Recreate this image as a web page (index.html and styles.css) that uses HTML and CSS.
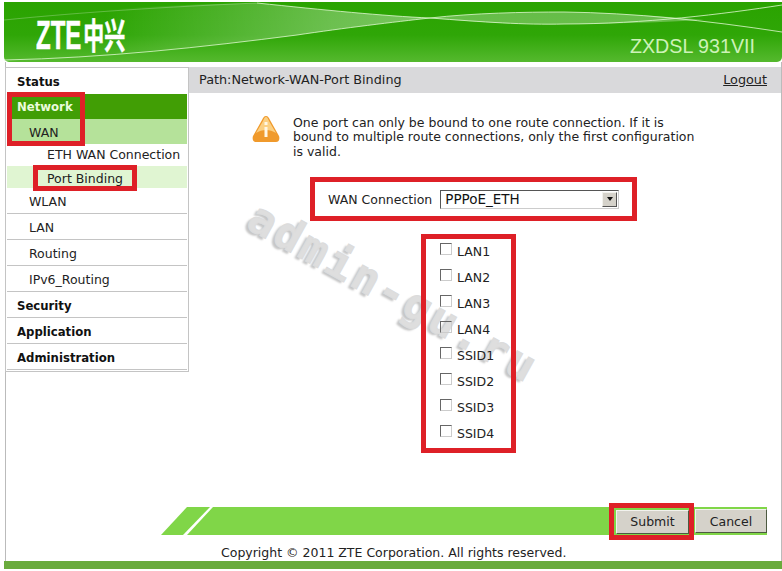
FILE: index.html
```html
<!DOCTYPE html>
<html lang="en">

<head>
    <meta charset="UTF-8">
    <meta name="viewport" content="width=device-width, initial-scale=1.0">
    <title>ZXDSL 931VII</title>
    <link rel="stylesheet" href="styles.css">
</head>

<body>

    <div class="page">
        <header class="banner">
            <svg class="swoosh" viewBox="0 0 778 60" preserveAspectRatio="none" aria-hidden="true">
                <defs>
                    <linearGradient id="ribbon" x1="0" x2="1" y1="0" y2="0">
                        <stop offset="0" stop-color="#fff" stop-opacity="0" />
                        <stop offset="0.7" stop-color="#fff" stop-opacity=".3" />
                        <stop offset="1" stop-color="#fff" stop-opacity=".36" />
                    </linearGradient>
                </defs>
                <path d="M100 8C150 4 200 2 253 1C320 8 380 14 426 16C390 20 340 26 293 33C230 41 170 48 100 52Z" fill="url(#ribbon)" />
                <path d="M426 16C470 11 520 10 560 10C610 11 660 14 700 18C660 20 610 22 560 22C520 23 470 20 426 16Z" fill="#fff" fill-opacity=".28" />
                <path d="M0 18C80 10 160 5 253 1" fill="none" stroke="#fff" stroke-opacity=".25" />
                <path d="M253 1C320 8 380 14 426 16C480 20 520 23 560 22C640 22 720 12 778 3" fill="none" stroke="#dff7cf" stroke-opacity=".8" />
                <path d="M0 58C100 56 200 45 293 33C340 26 390 20 426 16C470 11 520 10 560 10C630 11 700 18 778 30" fill="none" stroke="#dff7cf" stroke-opacity=".8" />
            </svg>
            <div class="logo"><span class="logo-text">ZTE<span class="logo-cjk">中兴</span></span></div>
            <div class="model">ZXDSL 931VII</div>
        </header>

        <div class="watermark">admin-gu.ru</div>

        <div class="sheet">
            <div class="columns">
                <!-- Menu lateral -->
                <nav class="menu">
                    <a class="menu-top" href="#">Status</a>
                    <a class="menu-top active" href="#">Network</a>
                    <a class="menu-sub active-sub" href="#">WAN</a>
                    <a class="menu-leaf eth" href="#">ETH WAN Connection</a>
                    <a class="menu-leaf active-leaf" href="#">Port Binding</a>
                    <a class="menu-sub line" href="#">WLAN</a>
                    <a class="menu-sub line" href="#">LAN</a>
                    <a class="menu-sub line" href="#">Routing</a>
                    <a class="menu-sub line" href="#">IPv6_Routing</a>
                    <a class="menu-top line" href="#">Security</a>
                    <a class="menu-top line" href="#">Application</a>
                    <a class="menu-top line" href="#">Administration</a>
                    <span class="mark mark-network"></span>
                    <span class="mark mark-port"></span>
                </nav>

                <main class="content">
                    <div class="path-bar">
                        <span>Path:Network-WAN-Port Binding</span>
                        <a href="#">Logout</a>
                    </div>

                    <div class="notice">
                        <svg class="notice-icon" viewBox="0 0 28 26" aria-hidden="true">
                            <path d="M14 0C12 0 11 2 10 4L1 20C0 23 1 26 4 26H24C27 26 28 23 27 20L18 4C17 2 16 0 14 0Z" fill="#f09a2c" />
                            <path d="M14 1C12.500 1 12 3 11 5L4 17C10 13 18 13 24 17L17 5C16 3 15.500 1 14 1Z" fill="#fbd083" />
                            <rect x="12.500" y="6" width="3" height="3" fill="#fff7e6" />
                            <rect x="12.500" y="11" width="3" height="10" fill="#fff7e6" />
                        </svg>
                        <p>One port can only be bound to one route connection. If it is bound to multiple route connections, only the first configuration is valid.</p>
                    </div>

                    <div class="wan-box">
                        <label class="wan-label">WAN Connection</label>
                        <div class="select">
                            <span>PPPoE_ETH</span>
                            <span class="select-btn"><i></i></span>
                        </div>
                    </div>

                    <div class="ports">
                        <label class="port"><span class="check"></span>LAN1</label>
                        <label class="port"><span class="check"></span>LAN2</label>
                        <label class="port"><span class="check"></span>LAN3</label>
                        <label class="port"><span class="check"></span>LAN4</label>
                        <label class="port"><span class="check"></span>SSID1</label>
                        <label class="port"><span class="check"></span>SSID2</label>
                        <label class="port"><span class="check"></span>SSID3</label>
                        <label class="port"><span class="check"></span>SSID4</label>
                    </div>
                </main>
            </div>

            <div class="toolbar">
                <svg class="toolbar-slant" viewBox="0 0 52 28" aria-hidden="true">
                    <polygon points="0,28 26,0 49,0 22,28" fill="#80d648" />
                    <polygon points="26,28 52,0 52,28" fill="#80d648" />
                </svg>
                <div class="toolbar-fill">
                    <span class="submit-mark"><button class="btn btn-submit" type="button">Submit</button></span>
                    <button class="btn" type="button">Cancel</button>
                </div>
            </div>

            <div class="copyright">Copyright © 2011 ZTE Corporation. All rights reserved.</div>
        </div>

        <div class="band"></div>
    </div>

</body>

</html>
```

FILE: styles.css
```css
body {
    margin: 0;
    padding: 0;
    background-color: #fff;
    color: #222;
    font-family: "DejaVu Sans", Verdana, sans-serif;
    font-size: 12.5px;
}

a {
    color: inherit;
    text-decoration: none;
}

.page {
    position: relative;
    height: 571px;
    padding: 2px 0 2px 4px;
    box-sizing: border-box;
    display: flex;
    flex-direction: column;
    overflow: hidden;
}

/* Cabecera verde */
.banner {
    position: relative;
    height: 60px;
    flex: none;
    display: flex;
    justify-content: space-between;
    align-items: center;
    border-radius: 0 0 5px 5px;
    background: linear-gradient(#2aa300, #2fa607 55%, #55b92e);
}

.swoosh {
    position: absolute;
    left: 0;
    top: 0;
    width: 100%;
    height: 100%;
}

.logo {
    position: relative;
    width: 90px;
    margin-left: 32px;
    margin-top: 4px;
}

.logo-text {
    display: inline-block;
    transform: scaleX(0.6);
    transform-origin: left center;
    color: #fff;
    font-family: "Liberation Sans", sans-serif;
    font-weight: bold;
    font-size: 40px;
    line-height: 40px;
    white-space: nowrap;
    -webkit-text-stroke: 0.6px #fff;
}

.logo-cjk {
    margin-left: 3px;
    font-family: "Noto Sans CJK SC", sans-serif;
    font-size: 35px;
}

.model {
    position: relative;
    margin: 28px 27px 0 0;
    color: #cdf2b8;
    font-family: "Liberation Sans", sans-serif;
    font-size: 19.700px;
}

/* Marca de agua por debajo del contenido */
.watermark {
    position: absolute;
    z-index: 0;
    left: 252px;
    top: 188px;
    transform: rotate(29deg);
    transform-origin: left center;
    color: #dedede;
    font-family: "DejaVu Sans Mono", monospace;
    font-weight: bold;
    font-size: 44px;
    letter-spacing: 3px;
    -webkit-text-stroke: 1px #dcdcdc;
    text-shadow: -2px 3px 2px #c6c6c6;
    pointer-events: none;
}

.sheet {
    position: relative;
    z-index: 1;
    flex: 1;
    min-height: 0;
    display: flex;
    flex-direction: column;
    margin-left: 1px;
    border-left: 1px solid #bbb;
    border-right: 1px solid #bbb;
}

.columns {
    flex: 1;
    display: flex;
    min-height: 0;
}

/* Menu lateral */
.menu {
    position: relative;
    flex: none;
    align-self: flex-start;
    display: flex;
    flex-direction: column;
    width: 180px;
    margin: 5px 0 0 -1px;
    padding: 0 1px 1px 1px;
    border: 1px solid #c4c4c4;
    background-color: #fff;
}

.menu a {
    display: flex;
    align-items: center;
    box-sizing: border-box;
}

.menu-top {
    height: 26px;
    padding-top: 1px;
    padding-left: 10px;
    font-weight: bold;
    font-size: 11.700px;
    color: #111;
}

.menu-sub {
    height: 25px;
    padding-top: 1px;
    padding-left: 22px;
}

.menu-leaf {
    height: 22px;
    padding-left: 40px;
}

.eth {
    padding-bottom: 2px;
}

.line {
    height: 26px;
    padding-top: 1px;
    border-bottom: 1px solid #c4c4c4;
}

.menu-top.line {
    padding-top: 2px;
}

.menu .active {
    height: 25px;
    background-color: #419e05;
    color: #eafbdc;
}

.active-sub {
    background-color: #b5e29a;
}

.active-leaf {
    padding-top: 2px;
    background-color: #e0f5d2;
}

/* Marcas rojas sobre la captura */
.mark {
    position: absolute;
    border: 5px solid #de2027;
    box-sizing: border-box;
}

.mark-network {
    left: 1px;
    top: 24px;
    width: 78px;
    height: 54px;
}

.mark-port {
    left: 27px;
    top: 97px;
    width: 104px;
    height: 26px;
}

.content {
    flex: 1;
    min-width: 0;
    display: flex;
    flex-direction: column;
    align-items: flex-start;
}

.path-bar {
    align-self: stretch;
    display: flex;
    justify-content: space-between;
    align-items: center;
    box-sizing: border-box;
    height: 26px;
    margin-top: 5px;
    padding: 0 14px 2px 10px;
    background-color: #d9d9db;
    font-size: 12.800px;
}

.path-bar a {
    text-decoration: underline;
}

.notice {
    display: flex;
    margin: 23px 0 0 63px;
}

.notice-icon {
    flex: none;
    width: 28px;
    height: 26px;
    margin-right: 13px;
}

.notice p {
    width: 410px;
    margin: 0;
    line-height: 14.400px;
}

.wan-box {
    display: flex;
    align-items: center;
    box-sizing: border-box;
    width: 327px;
    height: 44px;
    margin: 17.800px 0 0 121px;
    padding-left: 13px;
    border: 5px solid #de2027;
    background-color: #fff;
}

.wan-label {
    margin-right: 8px;
}

.select {
    display: flex;
    justify-content: space-between;
    align-items: center;
    box-sizing: border-box;
    width: 179px;
    height: 19px;
    padding: 0 1px 0 4px;
    border: 1px solid;
    border-color: #555 #ccc #ccc #555;
    color: #111;
    font-size: 13.500px;
}

.select-btn {
    display: flex;
    align-items: center;
    justify-content: center;
    box-sizing: border-box;
    width: 15px;
    height: 15px;
    background-color: #d5d2ca;
    border: 1px solid;
    border-color: #f2f2ee #555 #555 #f2f2ee;
}

.select-btn i {
    border: 3px solid transparent;
    border-top: 4px solid #111;
    border-bottom: 0;
}

.ports {
    display: flex;
    flex-direction: column;
    box-sizing: border-box;
    width: 95px;
    height: 219px;
    margin: 13px 0 0 232px;
    padding-left: 14px;
    border: 5px solid #de2027;
}

.port {
    display: flex;
    align-items: center;
    box-sizing: border-box;
    height: 26px;
    padding-bottom: 2px;
}

.check {
    flex: none;
    box-sizing: border-box;
    width: 12px;
    height: 12px;
    margin: -4px 5px 0 0;
    border: 1px solid;
    border-color: #666 #ccc #ccc #666;
}

/* Barra de botones */
.toolbar {
    flex: none;
    display: flex;
    height: 28px;
    margin: 0 14px 0 155px;
}

.toolbar-slant {
    flex: none;
    width: 52px;
    height: 28px;
}

.toolbar-fill {
    flex: 1;
    display: flex;
    justify-content: flex-end;
    align-items: center;
    gap: 6px;
    background-color: #80d648;
}

.btn {
    width: 72px;
    height: 24px;
    padding: 0;
    font: inherit;
    color: #222;
    background-color: #d5d2ca;
    border: 1px solid;
    border-color: #f2f2ee #4c5a40 #4c5a40 #f2f2ee;
}

.btn-submit {
    width: 73px;
}

.submit-mark {
    display: flex;
    padding: 2px 0 1px 2px;
    outline: 5px solid #de2027;
}

.copyright {
    flex: none;
    height: 26px;
    box-sizing: border-box;
    padding: 11px 0 0 215px;
    line-height: 14px;
}

.band {
    flex: none;
    height: 8px;
    background-color: #6aab3d;
}
```
